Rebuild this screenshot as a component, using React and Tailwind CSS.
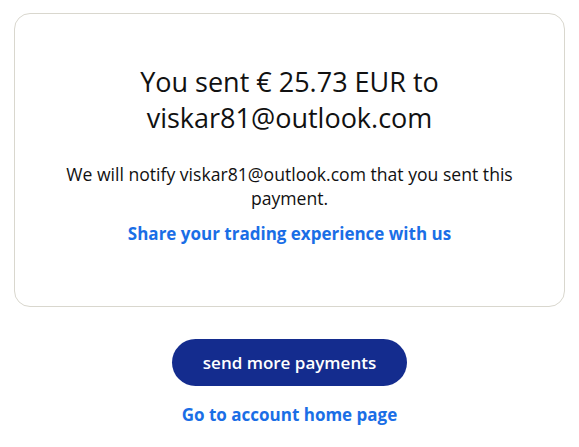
export default function App() {
  return (
    <div className="w-[579px] h-[447px] bg-white flex flex-col items-center" style={{ fontFamily: '"Open Sans", sans-serif' }}>
      <div className="mt-[13px] w-[551px] h-[294px] border border-[#d9d7ce] rounded-[16px] flex flex-col items-center pt-[50px]">
        <h1 className="text-[27px] leading-[36px] text-[#111] text-center">
          You sent € 25.73 EUR to<br />viskar81@outlook.com
        </h1>
        <p className="mt-[26px] text-[17.6px] leading-[24px] text-[#111] text-center px-[36px]">
          We will notify viskar81@outlook.com that you sent this payment.
        </p>
        <a className="mt-[12px] text-[17px] leading-[24px] font-bold text-[#1a6ee6]">Share your trading experience with us</a>
      </div>
      <button className="mt-[32px] w-[235px] h-[47px] rounded-full bg-[#142c8e] text-white text-[17px] font-semibold">send more payments</button>
      <a className="mt-[17px] text-[17px] leading-[24px] font-bold text-[#1a6ee6]">Go to account home page</a>
    </div>
  );
}
